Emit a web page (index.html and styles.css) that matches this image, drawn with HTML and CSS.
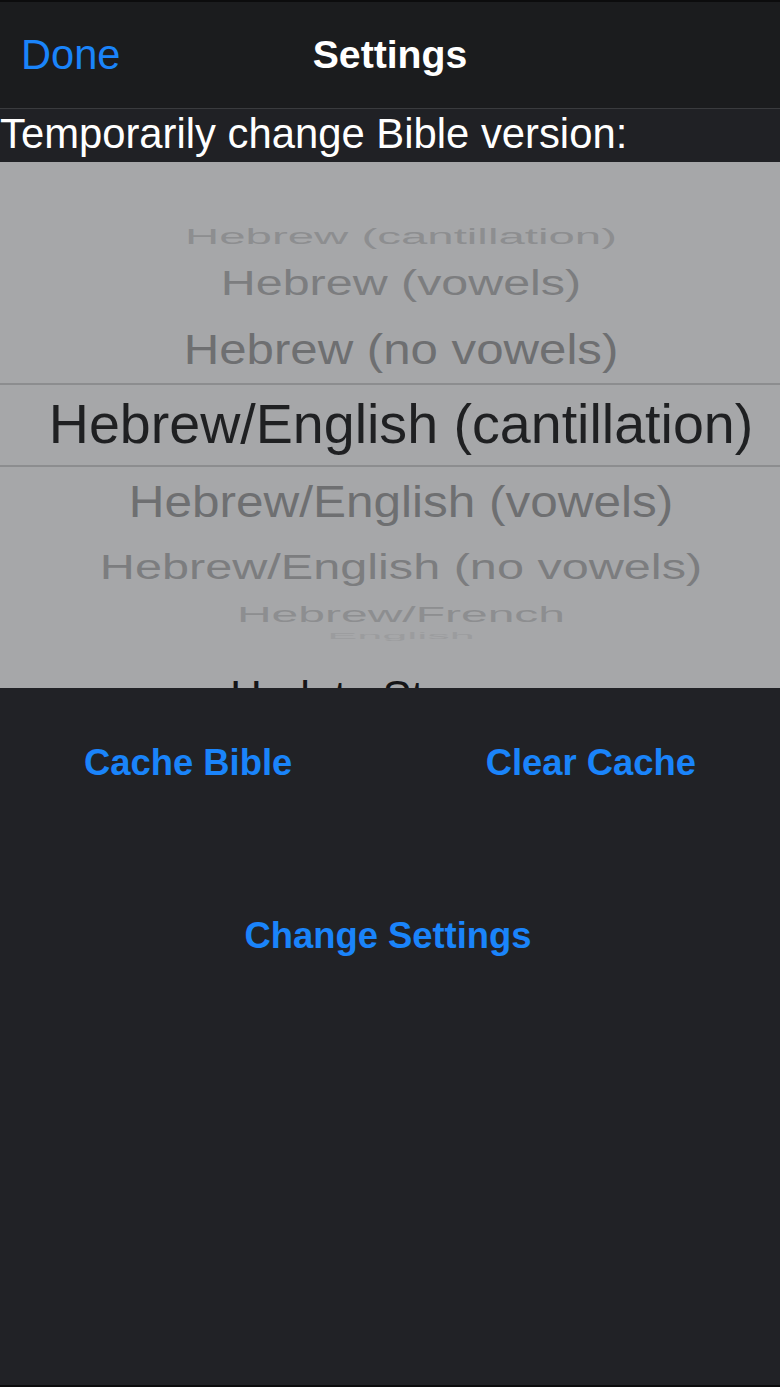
FILE: index.html
```html
<!DOCTYPE html>
<html lang="en">
<head>
<meta charset="utf-8">
<title>Settings</title>
<link rel="stylesheet" href="styles.css">
</head>
<body>
<div class="screen">
  <header class="navbar">
    <div class="nav-left"><span class="done">Done</span></div>
    <div class="nav-title">Settings</div>
    <div class="nav-right"></div>
  </header>
  <div class="caption">Temporarily change Bible version:</div>
  <div class="picker">
    <div class="pad-top"></div>
    <div class="row r-m3"><span>Hebrew (cantillation)</span></div>
    <div class="row r-m2"><span>Hebrew (vowels)</span></div>
    <div class="row r-m1"><span>Hebrew (no vowels)</span></div>
    <div class="row r-sel"><span>Hebrew/English (cantillation)</span></div>
    <div class="row r-p1"><span>Hebrew/English (vowels)</span></div>
    <div class="row r-p2"><span>Hebrew/English (no vowels)</span></div>
    <div class="row r-p3"><span>Hebrew/French</span></div>
    <div class="row r-p4"><span>English</span></div>
    <div class="row r-update"><span>Update Storage</span></div>
  </div>
  <main class="actions">
    <div class="btn-row">
      <span class="btn">Cache Bible</span>
      <span class="btn">Clear Cache</span>
    </div>
    <div class="btn-center">
      <span class="btn">Change Settings</span>
    </div>
  </main>
</div>
</body>
</html>
```

FILE: styles.css
```css
* { box-sizing: border-box; }

html, body {
  margin: 0;
  padding: 0;
  background: #212226;
  font-family: "Liberation Sans", Arial, Helvetica, sans-serif;
}

.screen {
  width: 780px;
  height: 1387px;
  display: flex;
  flex-direction: column;
  overflow: hidden;
}

.navbar {
  height: 109px;
  flex: none;
  background: #1b1c1e;
  border-top: 2px solid #0c0c0d;
  border-bottom: 1px solid #3a3b3e;
  display: grid;
  grid-template-columns: 1fr auto 1fr;
  align-items: center;
}

.nav-left {
  padding-left: 21px;
}

.done {
  font-size: 41.6px;
  line-height: 1;
  color: #1a84fa;
  display: block;
}

.nav-title {
  font-size: 39.2px;
  font-weight: bold;
  line-height: 1;
  color: #ffffff;
}

.caption {
  height: 53px;
  flex: none;
  background: #202125;
  color: #ffffff;
  font-size: 41.8px;
  line-height: 50px;
  white-space: nowrap;
}

.picker {
  height: 526px;
  flex: none;
  background: #a6a7a9;
  overflow: hidden;
  display: flex;
  flex-direction: column;
  padding-left: 22px;
}

.pad-top { height: 52px; flex: none; }

.row {
  flex: none;
  display: flex;
  align-items: center;
  justify-content: center;
  white-space: nowrap;
}

.row span {
  display: block;
  line-height: 1;
  transform-origin: 50% 50%;
}

.r-m3 { height: 44px; }
.r-m3 span { font-size: 47.4px; color: #8d8e90; transform: scaleY(0.48); }

.r-m2 { height: 50px; }
.r-m2 span { font-size: 48.4px; color: #7c7d7f; transform: scaleY(0.73); }

.r-m1 { height: 75px; padding-top: 6px; }
.r-m1 span { font-size: 49.2px; color: #6e6f71; transform: scaleY(0.88); }

.r-sel {
  height: 84px;
  border-top: 2px solid #8c8d8f;
  border-bottom: 2px solid #8c8d8f;
  margin-left: -22px;
  padding-left: 22px;
}
.r-sel span { font-size: 55.6px; color: #1f2022; }

.r-p1 { height: 69px; }
.r-p1 span { font-size: 49.5px; color: #6e6f71; transform: scaleY(0.88); }

.r-p2 { height: 63px; }
.r-p2 span { font-size: 48.6px; color: #7c7d7f; transform: scaleY(0.72); }

.r-p3 { height: 30px; }
.r-p3 span { font-size: 48px; color: #8d8e90; transform: scaleY(0.47); }

.r-p4 { height: 14px; }
.r-p4 span { font-size: 45px; color: #9b9c9e; transform: scaleY(0.19); }

.r-update { height: 110px; padding-right: 37px; }
.r-update span { font-size: 43.5px; color: #151517; }

.actions {
  flex: 1;
  background: #212226;
  border-bottom: 2px solid #0c0c0d;
  padding-top: 57px;
}

.btn-row {
  display: flex;
  justify-content: space-between;
  padding: 0 84px;
}

.btn {
  font-size: 36.4px;
  font-weight: bold;
  line-height: 1;
  color: #1a84fa;
  white-space: nowrap;
  display: block;
}

.btn-center {
  display: flex;
  justify-content: center;
  margin-top: 137px;
  padding-right: 4px;
}
```
